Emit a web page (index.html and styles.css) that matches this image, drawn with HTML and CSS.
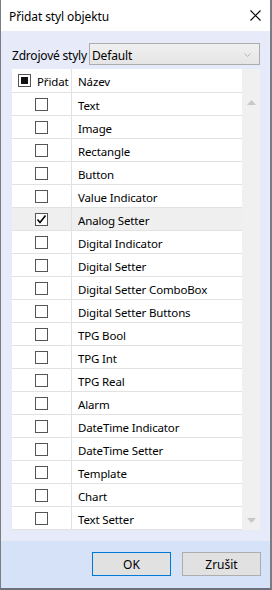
FILE: index.html
```html
<!DOCTYPE html>
<html>
<head>
<meta charset="utf-8">
<link rel="stylesheet" href="styles.css">
</head>
<body>
<div class="window">
  <div class="titlebar">
    <span class="title">Přidat styl objektu</span>
    <svg class="close" width="11" height="11" viewBox="0 0 11 11"><path d="M0.5 0.5 L10.5 10.5 M10.5 0.5 L0.5 10.5" stroke="#000" stroke-width="1.1" fill="none"/></svg>
  </div>
  <div class="content">
    <div class="source">
      <span class="label">Zdrojové styly</span>
      <div class="combo">
        <span class="combo-text">Default</span>
        <svg class="chev" width="7" height="4" viewBox="0 0 7 4"><path d="M0.5 0.5 L3.5 3.5 L6.5 0.5" stroke="#b5b5b5" stroke-width="1" fill="none"/></svg>
      </div>
    </div>
    <div class="grid">
      <div class="list">
        <div class="row head">
          <div class="c1"><span class="cb ind"></span><span class="txt">Přidat</span></div>
          <div class="c2"><span class="txt">Název</span></div>
        </div>
        <div class="row"><div class="c1"><span class="cb"></span></div><div class="c2"><span class="txt">Text</span></div></div>
        <div class="row"><div class="c1"><span class="cb"></span></div><div class="c2"><span class="txt">Image</span></div></div>
        <div class="row"><div class="c1"><span class="cb"></span></div><div class="c2"><span class="txt">Rectangle</span></div></div>
        <div class="row"><div class="c1"><span class="cb"></span></div><div class="c2"><span class="txt">Button</span></div></div>
        <div class="row"><div class="c1"><span class="cb"></span></div><div class="c2"><span class="txt">Value Indicator</span></div></div>
        <div class="row sel"><div class="c1"><span class="cb"><svg width="11" height="11" viewBox="0 0 11 11"><path d="M1.5 5.5 L4 8.5 L9.5 1.5" stroke="#000" stroke-width="1.6" fill="none"/></svg></span></div><div class="c2"><span class="txt">Analog Setter</span></div></div>
        <div class="row"><div class="c1"><span class="cb"></span></div><div class="c2"><span class="txt">Digital Indicator</span></div></div>
        <div class="row"><div class="c1"><span class="cb"></span></div><div class="c2"><span class="txt">Digital Setter</span></div></div>
        <div class="row"><div class="c1"><span class="cb"></span></div><div class="c2"><span class="txt">Digital Setter ComboBox</span></div></div>
        <div class="row"><div class="c1"><span class="cb"></span></div><div class="c2"><span class="txt">Digital Setter Buttons</span></div></div>
        <div class="row"><div class="c1"><span class="cb"></span></div><div class="c2"><span class="txt">TPG Bool</span></div></div>
        <div class="row"><div class="c1"><span class="cb"></span></div><div class="c2"><span class="txt">TPG Int</span></div></div>
        <div class="row"><div class="c1"><span class="cb"></span></div><div class="c2"><span class="txt">TPG Real</span></div></div>
        <div class="row"><div class="c1"><span class="cb"></span></div><div class="c2"><span class="txt">Alarm</span></div></div>
        <div class="row"><div class="c1"><span class="cb"></span></div><div class="c2"><span class="txt">DateTime Indicator</span></div></div>
        <div class="row"><div class="c1"><span class="cb"></span></div><div class="c2"><span class="txt">DateTime Setter</span></div></div>
        <div class="row"><div class="c1"><span class="cb"></span></div><div class="c2"><span class="txt">Template</span></div></div>
        <div class="row"><div class="c1"><span class="cb"></span></div><div class="c2"><span class="txt">Chart</span></div></div>
        <div class="row"><div class="c1"><span class="cb"></span></div><div class="c2"><span class="txt">Text Setter</span></div></div>
      </div>
      <div class="scrollbar">
        <svg width="9" height="5" viewBox="0 0 9 5"><path d="M0 5 L4.5 0 L9 5 Z" fill="#c8c8c8"/></svg>
        <svg width="9" height="5" viewBox="0 0 9 5"><path d="M0 0 L4.5 5 L9 0 Z" fill="#c8c8c8"/></svg>
      </div>
    </div>
  </div>
  <div class="footer">
    <button class="btn ok">OK</button>
    <button class="btn">Zrušit</button>
  </div>
</div>
</body>
</html>
```
FILE: styles.css
```css
html, body {
  margin: 0;
  padding: 0;
  background: #fff;
}
body {
  font-family: "Noto Sans", "Open Sans", sans-serif;
  font-size: 11.5px;
  letter-spacing: -0.15px;
  color: #000;
}
.window {
  width: 272px;
  height: 590px;
  box-sizing: border-box;
  border-left: 1px solid #7a7d84;
  border-right: 2px solid #7a7d84;
  border-bottom: 2px solid #6e7178;
  display: flex;
  flex-direction: column;
}
.titlebar {
  height: 31px;
  background: #fff;
  display: flex;
  align-items: center;
  justify-content: space-between;
  padding: 0 9px 0 8px;
  flex: none;
}
.title {
  font-size: 12px;
  letter-spacing: -0.1px;
  padding-top: 1px;
}
.close {
  margin-top: -1px;
}
.content {
  background: #e7eaf9;
  padding: 12px 10px 11px 11px;
  flex: none;
}
.source {
  display: flex;
  align-items: center;
  justify-content: space-between;
  height: 22px;
}
.label {
  white-space: nowrap;
  font-size: 12px;
  letter-spacing: -0.2px;
  padding-top: 2px;
}
.combo {
  width: 171px;
  height: 22px;
  flex: none;
  box-sizing: border-box;
  border: 1px solid #acacac;
  background: linear-gradient(#f0f0f0, #e5e5e5);
  display: flex;
  align-items: center;
  justify-content: space-between;
  padding: 0 8px 0 2px;
}
.combo-text {
  font-size: 12px;
  padding-top: 2px;
}
.chev {
  margin-top: 1px;
}
.grid {
  margin-top: 4px;
  display: flex;
  height: 461px;
  background: #fff;
}
.list {
  flex: 1;
}
.row {
  display: grid;
  grid-template-columns: 60px 1fr;
  height: 23px;
  box-sizing: border-box;
  border-bottom: 1px solid #e2e2e2;
  background: #fff;
}
.row.head {
  height: 24px;
}
.row.sel {
  background: #efefef;
}
.txt {
  padding-top: 2px;
  white-space: nowrap;
}
.c1 {
  border-right: 1px solid #e2e2e2;
  display: flex;
  align-items: center;
  justify-content: center;
}
.head .c1 {
  justify-content: flex-start;
  padding-left: 6px;
  gap: 6px;
}
.c2 {
  display: flex;
  align-items: center;
  padding-left: 6px;
}
.cb {
  width: 13px;
  height: 13px;
  box-sizing: border-box;
  border: 1px solid #555;
  background: #fff;
  display: flex;
  align-items: center;
  justify-content: center;
}
.cb.ind::after {
  content: "";
  width: 7px;
  height: 7px;
  background: #111;
}
.scrollbar {
  width: 18px;
  background: #f0f0f0;
  display: flex;
  flex-direction: column;
  justify-content: space-between;
  align-items: center;
  padding: 31px 0 7px;
}
.footer {
  flex: 1;
  background: #d6e2f7;
  display: flex;
  justify-content: flex-end;
  align-items: flex-start;
  gap: 11px;
  padding: 11px 9px 0 0;
}
.btn {
  width: 79px;
  height: 24px;
  box-sizing: border-box;
  border: 1px solid #adadad;
  background: #e1e1e1;
  font-family: "Noto Sans", "Open Sans", sans-serif;
  font-size: 12px;
  color: #000;
  padding: 1px 0 0;
}
.btn.ok {
  border-color: #0078d7;
}
```
